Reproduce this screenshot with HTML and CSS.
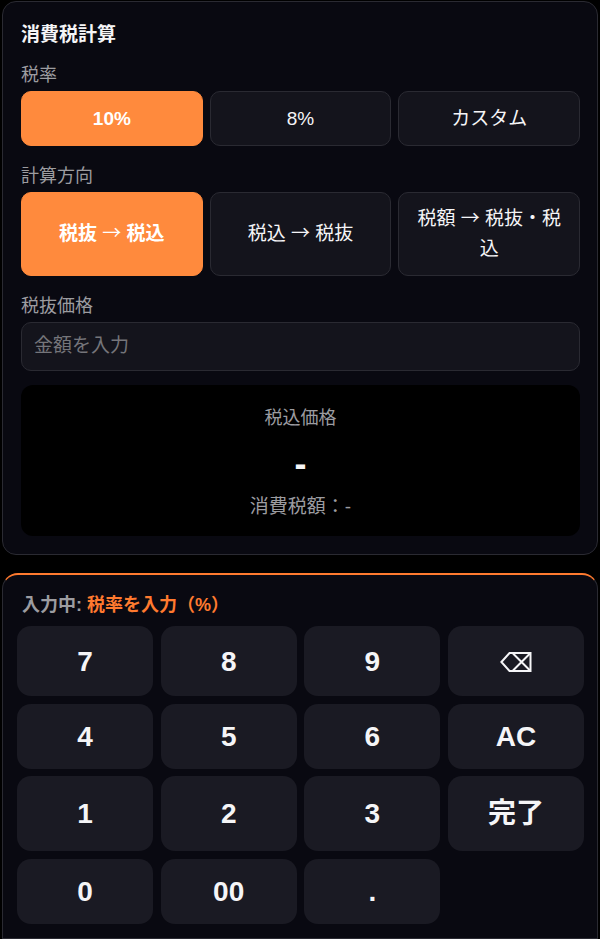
FILE: index.html
```html
<!DOCTYPE html>
<html lang="ja">
<head>
    <title>消費税計算</title>
    <meta name="viewport" content="width=device-width, initial-scale=1.0">
    <link rel="stylesheet" href="styles.css">
</head>
<body>
    <div class="card">
        <h2>消費税計算</h2>

        <label class="field-label">税率</label>
        <div class="option-row">
            <button class="option active">10%</button>
            <button class="option">8%</button>
            <button class="option">カスタム</button>
        </div>

        <label class="field-label">計算方向</label>
        <div class="option-row">
            <button class="option active">税抜 <span class="arrow">→</span> 税込</button>
            <button class="option">税込 <span class="arrow">→</span> 税抜</button>
            <button class="option">税額 <span class="arrow">→</span> 税抜・税込</button>
        </div>

        <label class="field-label">税抜価格</label>
        <input class="amount" type="text" placeholder="金額を入力" readonly>

        <div class="result">
            <div class="result-label">税込価格</div>
            <div class="result-value">-</div>
            <div class="result-tax">消費税額：-</div>
        </div>
    </div>

    <div class="keypad">
        <div class="keypad-status">入力中: <span class="keypad-target">税率を入力（%）</span></div>
        <div class="keys">
            <button class="key">7</button>
            <button class="key">8</button>
            <button class="key">9</button>
            <button class="key" aria-label="backspace">
                <svg class="key-icon" width="32" height="20" viewBox="0 0 32 20" fill="none" stroke="currentColor" stroke-width="2">
                    <path d="M1.4 10 L9.5 1 H30.5 V19 H9.5 Z"/>
                    <path d="M13 1.5 L30 18.5 M30 1.5 L13 18.5"/>
                </svg>
            </button>
            <button class="key">4</button>
            <button class="key">5</button>
            <button class="key">6</button>
            <button class="key">AC</button>
            <button class="key">1</button>
            <button class="key">2</button>
            <button class="key">3</button>
            <button class="key key-done">完了</button>
            <button class="key">0</button>
            <button class="key">00</button>
            <button class="key">.</button>
        </div>
    </div>
</body>
</html>
```

FILE: styles.css
```css
* {
    box-sizing: border-box;
}

body {
    margin: 0;
    padding: 1px 2px 0;
    background-color: #000;
    color: #f5f5f7;
    font-family: "Liberation Sans", "Noto Sans CJK JP", sans-serif;
}

.card {
    height: 554px;
    padding: 21px 17px 18px 18px;
    background-color: #090911;
    border: 1px solid #2a2a32;
    border-radius: 14px;
}

h2 {
    margin: 0 0 16px;
    font-size: 19px;
    line-height: 24px;
    font-weight: 700;
}

.field-label {
    display: block;
    margin-bottom: 4px;
    color: #9c9ca0;
    font-size: 18px;
    line-height: 24px;
}

.option-row {
    display: grid;
    grid-template-columns: repeat(3, 1fr);
    gap: 7px;
    margin-bottom: 17.5px;
}

.option {
    padding: 11.75px 12px;
    background-color: #14141c;
    border: 1px solid #2a2a32;
    border-radius: 10px;
    color: #f5f5f7;
    font-family: inherit;
    font-size: 19px;
    line-height: 29.5px;
}

.option.active {
    background-color: #ff8a3d;
    border-color: #ff8a3d;
    color: #fff;
    font-weight: 700;
}

.arrow {
    font-family: "Noto Sans CJK JP", sans-serif;
    font-weight: 400;
    line-height: 1;
}

.amount {
    display: block;
    width: 100%;
    height: 49px;
    padding: 0 12px;
    background-color: #14141c;
    border: 1px solid #2a2a32;
    border-radius: 10px;
    color: #f5f5f7;
    font-family: inherit;
    font-size: 19px;
}

.amount::placeholder {
    color: #75757a;
}

.result {
    height: 151px;
    margin-top: 14px;
    padding: 21px 12px 0;
    background-color: #000;
    border-radius: 12px;
    text-align: center;
}

.result-label {
    color: #9c9ca0;
    font-size: 18px;
    line-height: 24px;
}

.result-value {
    margin-top: 14px;
    font-size: 36px;
    font-weight: 700;
    line-height: 40px;
}

.result-tax {
    margin-top: 10px;
    color: #9c9ca0;
    font-size: 19px;
    line-height: 26px;
}

.keypad {
    height: 366px;
    margin-top: 18px;
    padding: 19px 13px 0 14px;
    background-color: #090911;
    border: 1px solid #2a2a32;
    border-top: 2px solid #ff7a2f;
    border-radius: 16px 16px 0 0;
}

.keypad-status {
    padding-left: 5px;
    margin-bottom: 10px;
    color: #9c9ca0;
    font-size: 18px;
    font-weight: 700;
    line-height: 22px;
}

.keypad-target {
    color: #ff7a2f;
}

.keys {
    display: grid;
    grid-template-columns: repeat(4, 1fr);
    grid-template-rows: 70px 65px 75px 65px;
    gap: 7.5px;
}

.key {
    padding: 1px 8px 0;
    background-color: #1a1a23;
    border: none;
    border-radius: 14px;
    color: #f5f5f7;
    font-family: inherit;
    font-size: 28px;
    font-weight: 700;
}

.key-done {
    padding-bottom: 7px;
}

.key-icon {
    display: block;
    margin: 1px auto 0;
}
```
